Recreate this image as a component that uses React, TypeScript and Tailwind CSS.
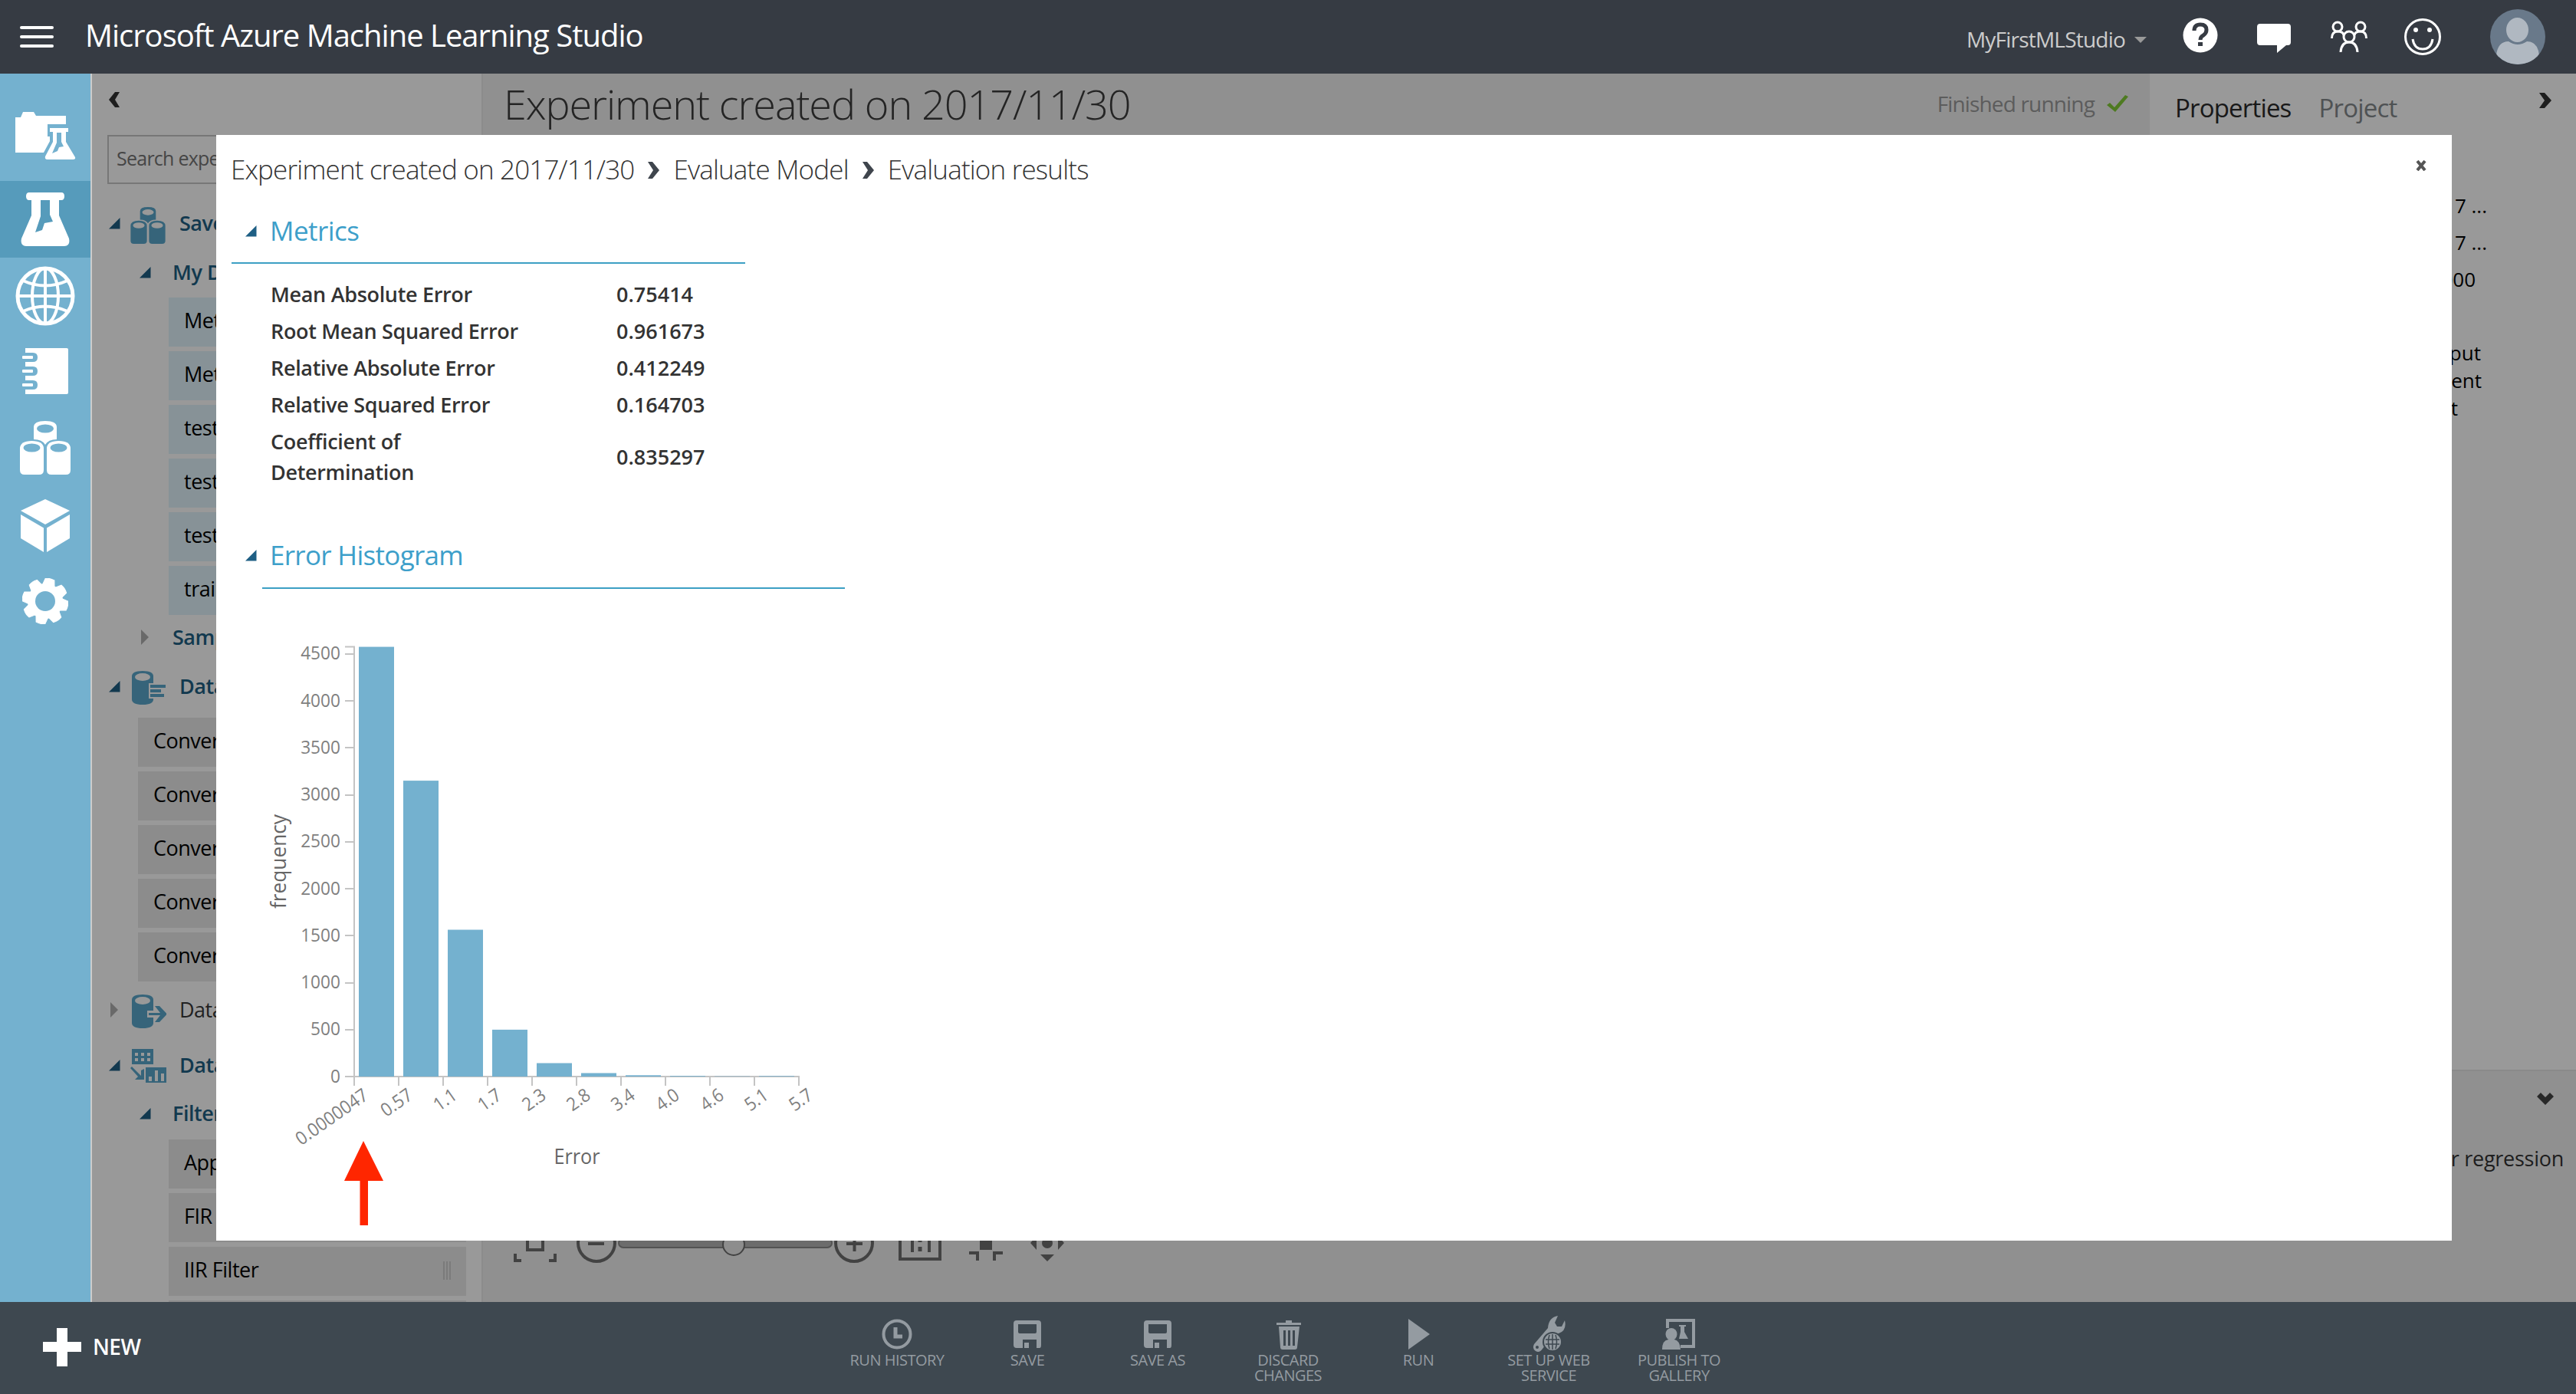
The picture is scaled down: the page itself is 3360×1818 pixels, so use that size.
import type { ReactNode } from "react";

type Size = { className?: string };

function Flask({ className = "", hole }: Size & { hole: string }) {
  return (
    <svg viewBox="0 0 64 70" className={className}>
      <path
        d="M11 0h42q4 0 4 5t-4 5h-3v20l13 30q2 10-6 10H7q-8 0-6-10l13-30V10h-3q-4 0-4-5t4-5z"
        fill="#fff"
      />
      <path d="M26 10h12v19l4 9-11 2-3 9-9 3 7-21z" fill={hole} />
    </svg>
  );
}

function ProjectsIcon() {
  return (
    <svg viewBox="0 0 80 64" className="h-16 w-20">
      <path d="M1 8h7l3-7h14l3 5h39v48H1z" fill="#fff" />
      <path
        d="M46 20h25v10h-4v10l12 24H36l13-24V30h-3z"
        fill="#fff"
        stroke="#74b1cf"
        strokeWidth="6"
      />
      <path d="M46 22h24v5h-3v13l12 20q1 3-3 3H43q-4 0-3-4l10-19V27h-4z" fill="#fff" />
      <path d="M55 28h6v12l3 6-6 1-2 5-7 3 6-14z" fill="#74b1cf" />
    </svg>
  );
}

function GlobeIcon() {
  return (
    <svg viewBox="0 0 78 78" className="size-[78px]" fill="none" stroke="#fff" strokeWidth="4">
      <circle cx="39" cy="39" r="36" strokeWidth="5" />
      <ellipse cx="39" cy="39" rx="17" ry="36" />
      <path d="M39 3v72M3 39h72M10 19q29 13 58 0M10 59q29-13 58 0" />
    </svg>
  );
}

function NotebookIcon() {
  return (
    <svg viewBox="0 0 60 60" className="size-[60px]">
      <path d="M4 0h54q2 0 2 2v56q0 2-2 2H4z" fill="#fff" />
      {[6, 24, 42].map((y) => (
        <g key={y}>
          <path d={`M0 ${y}h14q6 0 6 6t-6 6H0z`} fill="#74b1cf" />
          <rect x="0" y={y + 4} width="14" height="4" rx="1" fill="#fff" />
        </g>
      ))}
    </svg>
  );
}

function Cylinders({ className = "", fill, hole }: Size & { fill: string; hole: string }) {
  return (
    <svg viewBox="0 0 66 70" className={className} fill={fill}>
      <path d="M18 8q0-8 15-8t15 8v16q-11 0-15 7-4-7-15-7z" />
      <ellipse cx="33" cy="10" rx="11" ry="5.5" fill={hole} />
      <path d="M0 36q0-10 15.500-10T31 36v28q0 6-6 6H6q-6 0-6-6z" />
      <ellipse cx="15.500" cy="35" rx="11" ry="5.500" fill={hole} />
      <path d="M35 36q0-10 15.500-10T66 36v28q0 6-6 6H41q-6 0-6-6z" />
      <ellipse cx="50.500" cy="35" rx="11" ry="5.500" fill={hole} />
    </svg>
  );
}

function CubeIcon() {
  return (
    <svg viewBox="0 0 64 70" className="h-[70px] w-16" fill="#fff">
      <path d="M32 0 64 15 32 33 0 15z" />
      <path d="M0 20l30 17.500V69L0 51z" />
      <path d="M64 20 34 37.500V69l30-18z" />
    </svg>
  );
}

function GearIcon() {
  return (
    <svg viewBox="-30 -30 60 60" className="size-[60px]">
      <circle r="23" fill="#fff" />
      {[12, 57, 102, 147, 192, 237, 282, 327].map((a) => (
        <path
          key={a}
          d="M-8-20l2-9q6-2 12 0l2 9z"
          fill="#fff"
          stroke="#fff"
          strokeWidth="1"
          transform={`rotate(${a})`}
        />
      ))}
      <circle r="13" fill="#74b1cf" />
    </svg>
  );
}

function DataFormatIcon() {
  return (
    <svg viewBox="0 0 48 48" className="size-12" fill="#5aa7cb">
      <path d="M3 9q0-7 14-7t14 7v30q0 7-14 7T3 39z" />
      <ellipse cx="17" cy="10" rx="10" ry="5" fill="#fff" />
      <path d="M25 18h24v20H25z" fill="#fff" />
      <path d="M27 20h20v4H27zM27 26h14v4H27zM27 32h18v4H27z" />
    </svg>
  );
}

function DataInputIcon() {
  return (
    <svg viewBox="0 0 48 48" className="size-12" fill="#5aa7cb">
      <path d="M3 9q0-7 14-7t14 7v30q0 7-14 7T3 39z" />
      <ellipse cx="17" cy="10" rx="10" ry="5" fill="#fff" />
      <path d="M23 23h9v9h-9z" fill="#fff" />
      <path d="M25 26h15l-7-9h6l10 10.500L39 38h-6l7-9H25z" />
    </svg>
  );
}

function DataTransformIcon() {
  return (
    <svg viewBox="0 0 48 48" className="size-12" fill="#5aa7cb">
      <path d="M3 1h28v20H3z" />
      <path d="M7 6h4v4H7zM15 6h4v4h-4zM23 6h4v4h-4zM7 13h4v4H7zM15 13h4v4h-4zM23 13h4v4h-4z" fill="#fff" />
      <path d="M3 24l12 12v-7l4-2v14H7l4-4L1 26z" />
      <path d="M21 25h28v20H21z" />
      <path d="M25 37h4v6h-4zM33 29h4v14h-4zM41 33h4v10h-4z" fill="#fff" />
    </svg>
  );
}

const RAIL: { name: string; icon: ReactNode; className: string }[] = [
  { name: "projects", icon: <ProjectsIcon />, className: "h-[140px] pt-[22px]" },
  { name: "experiments", icon: <Flask hole="#569bbb" className="h-[70px] w-16" />, className: "h-[100px] bg-[#569bbb]" },
  { name: "web services", icon: <GlobeIcon />, className: "h-[100px]" },
  { name: "notebooks", icon: <NotebookIcon />, className: "h-[96px]" },
  { name: "datasets", icon: <Cylinders fill="#fff" hole="#74b1cf" className="h-[70px] w-[66px]" />, className: "h-[104px]" },
  { name: "models", icon: <CubeIcon />, className: "h-[100px]" },
  { name: "settings", icon: <GearIcon />, className: "h-[96px]" },
];

function Rail() {
  return (
    <nav className="flex w-[120px] shrink-0 flex-col border-r-2 border-[#ccc] bg-[#74b1cf]">
      {RAIL.map((item) => (
        <button
          key={item.name}
          type="button"
          aria-label={item.name}
          className={`flex w-full items-center justify-center ${item.className}`}
        >
          {item.icon}
        </button>
      ))}
    </nav>
  );
}

function OpenMark() {
  return (
    <svg viewBox="0 0 15 15" className="size-[15px] shrink-0">
      <path d="M14.500 0v14.500H0z" fill="#1e5f84" />
    </svg>
  );
}

function ClosedMark() {
  return (
    <svg viewBox="0 0 15 20" className="h-5 w-[15px] shrink-0">
      <path d="M2 0l10 10L2 20z" fill="#b0b0b0" />
    </svg>
  );
}

function Group({ label, icon, open = true, className = "" }: Size & { label: string; icon: ReactNode; open?: boolean }) {
  return (
    <div className={`flex shrink-0 items-center pl-[22px] ${className}`}>
      {open ? <OpenMark /> : <ClosedMark />}
      <span className="ml-3 mt-1">{icon}</span>
      <span className={open ? "ml-[17px] font-semibold text-[#1e5f84]" : "ml-[17px] text-[#383838]"}>{label}</span>
    </div>
  );
}

function SubGroup({ label, open = true, className = "" }: Size & { label: string; open?: boolean }) {
  return (
    <div className={`flex shrink-0 items-center pl-[62px] font-semibold text-[#1e5f84] ${className}`}>
      {open ? <OpenMark /> : <ClosedMark />}
      <span className="ml-7">{label}</span>
    </div>
  );
}

function Items({ labels, className = "" }: Size & { labels: string[] }) {
  return (
    <ul className="flex shrink-0 flex-col gap-1.5">
      {labels.map((label, i) => (
        <li
          key={i}
          className={`mr-5 flex h-16 items-center justify-between pr-5 pb-[3px] pl-5 text-black ${className}`}
        >
          {label}
          <span className="flex h-6 gap-0.5">
            <i className="w-0.5 bg-[#cdcdcd]" />
            <i className="w-0.5 bg-[#cdcdcd]" />
            <i className="w-0.5 bg-[#cdcdcd]" />
          </span>
        </li>
      ))}
    </ul>
  );
}

function ModulePanel() {
  return (
    <aside className="flex w-[510px] shrink-0 flex-col overflow-hidden border-r-2 border-[#eaeaea] bg-white text-[27px] tracking-[-0.018em]">
      <div className="flex h-20 shrink-0 items-start pl-[22px] pt-6">
        <svg viewBox="0 0 14 20" className="h-5 w-3.5">
          <path d="M8 0h6L8 10l6 10H8L0 10z" fill="#333" />
        </svg>
      </div>
      <div className="mx-5 flex h-16 shrink-0 items-center border-2 border-[#c6c6c6] pb-0.5 pl-[10px] text-[25px] tracking-[-0.03em] text-[#757575]">
        Search experiment items
      </div>
      <Group
        label="Saved Datasets"
        icon={<Cylinders fill="#5aa7cb" hole="#fff" className="size-12" />}
        className="mt-[21px] h-[61px]"
      />
      <SubGroup label="My Datasets" className="h-[66px]" />
      <Items
        labels={["Metadata - train", "Metadata - test", "test_01.csv", "test_02.csv", "test_03.csv", "train.csv"]}
        className="ml-[100px] bg-[#e1f3fc]"
      />
      <SubGroup label="Samples" open={false} className="h-[58px]" />
      <Group label="Data Format Conversions" icon={<DataFormatIcon />} className="mb-1.5 h-[70px]" />
      <Items
        labels={["Convert to ARFF", "Convert to CSV", "Convert to Dataset", "Convert to SVMLight", "Convert to TSV"]}
        className="ml-[60px] bg-[#e9e9e9]"
      />
      <Group label="Data Input and Output" icon={<DataInputIcon />} open={false} className="h-[74px]" />
      <Group label="Data Transformation" icon={<DataTransformIcon />} className="h-[70px]" />
      <SubGroup label="Filter" className="mb-[5px] h-[57px]" />
      <Items labels={["Apply Filter", "FIR Filter", "IIR Filter"]} className="ml-[100px] bg-[#e9e9e9]" />
      <div className="mt-1.5 mr-5 ml-[100px] h-0.5 shrink-0 bg-[#e9e9e9]" />
    </aside>
  );
}

function ZoomControls() {
  return (
    <svg viewBox="660 1590 740 64" className="ml-[30px] h-16 w-[740px]" fill="none" stroke="#6e6e6e" strokeWidth="4">
      <path d="M688 1606h20v24h-20zM672 1635v9h8M724 1635v9h-8" />
      <circle cx="778" cy="1621" r="24" />
      <path d="M767 1622h21" />
      <rect x="807" y="1615" width="278" height="12" rx="6" fill="#b5b5b5" stroke="#8a8a8a" strokeWidth="2" />
      <circle cx="957" cy="1623" r="14" fill="#ececec" stroke="#6e6e6e" strokeWidth="2" />
      <circle cx="1114" cy="1621" r="24" />
      <path d="M1104 1622h21M1114.500 1611v21" />
      <path d="M1174 1600h52v42h-52zM1190 1614v19M1212 1614v19" />
      <path d="M1200 1614v6M1200 1626v6" strokeWidth="5" />
      <path d="M1278 1610h16v20h-16z" fill="#6e6e6e" stroke="none" />
      <path d="M1264 1634h11v10M1308 1634h-11v10" />
      <g fill="#6e6e6e" stroke="none">
        <circle cx="1366" cy="1621" r="7" />
        <path d="M1344 1621l8-9v18zM1388 1621l-8-9v18zM1357 1636h18l-9 9z" />
      </g>
    </svg>
  );
}

function Canvas() {
  return (
    <main className="flex w-[2174px] shrink-0 flex-col justify-between bg-[#f1f1f1]">
      <div className="flex justify-between">
        <h1 className="ml-[27px] mt-[-3px] text-[54px] leading-[84px] font-light tracking-[-0.0205em] text-[#3c3c3c]">
          Experiment created on 2017/11/30
        </h1>
        <div className="mr-7 mt-[19px] flex h-10 items-center gap-4 text-[28px] tracking-[-0.03em] text-[#9a9a9a]">
          Finished running
          <svg viewBox="0 0 28 22" className="h-[22px] w-7">
            <path d="M0 13l4-3 6 6L24 0l4 2-17 20z" fill="#82cc38" />
          </svg>
        </div>
      </div>
      <div className="flex h-[108px]">
        <ZoomControls />
      </div>
    </main>
  );
}

const PROPERTY_LINES = [
  { text: "11/30/2017 ...", className: "mt-16 pr-[116px]" },
  { text: "11/30/2017 ...", className: "mt-3 pr-[116px]" },
  { text: "0:00:00.000", className: "mt-3 pr-[131px]" },
  { text: "View output", className: "mt-[60px] pr-[124px]" },
  { text: "View experiment", className: "pr-[123px]" },
  { text: "View result t", className: "pr-[154px]" },
];

function PropertiesPanel() {
  return (
    <aside className="flex grow flex-col bg-white text-[26px] text-black">
      <div className="flex h-[90px] shrink-0 items-center pl-[33px] text-[33px] tracking-[-0.025em]">
        <span className="text-[#2b2b2b]">Properties</span>
        <span className="ml-9 text-[#84898c]">Project</span>
        <svg viewBox="0 0 16 20" className="mb-5 ml-auto mr-8 h-5 w-4">
          <path d="M0 0h7l9 10-9 10H0l7-10z" fill="#333" />
        </svg>
      </div>
      <div className="flex h-[1209px] shrink-0 flex-col text-right">
        {PROPERTY_LINES.map((line, i) => (
          <p key={i} className={`leading-9 ${line.className}`}>
            {line.text}
          </p>
        ))}
      </div>
      <div className="flex grow flex-col items-end border-t-2 border-[#e6e6e6] bg-[#f1f1f1]">
        <svg viewBox="0 0 22 16" className="mr-[29px] mt-7 h-4 w-[22px]">
          <path d="M0 5l5-5 6 6 6-6 5 5-11 11z" fill="#444" />
        </svg>
        <p className="mr-4 mt-[50px] text-[27px] leading-10 tracking-[-0.01em] whitespace-nowrap text-[#333]">
          Evaluates a model for regression
        </p>
      </div>
    </aside>
  );
}

const METRICS = [
  ["Mean Absolute Error", "0.75414"],
  ["Root Mean Squared Error", "0.961673"],
  ["Relative Absolute Error", "0.412249"],
  ["Relative Squared Error", "0.164703"],
  ["Coefficient of Determination", "0.835297"],
];

const BINS = [4575, 3150, 1563, 499, 143, 37, 14, 7, 3, 6];
const X_LABELS = ["0.0000047", "0.57", "1.1", "1.7", "2.3", "2.8", "3.4", "4.0", "4.6", "5.1", "5.7"];
const Y_TICKS = [0, 500, 1000, 1500, 2000, 2500, 3000, 3500, 4000, 4500];

const X0 = 160;
const Y0 = 604;
const STEP = 58;
const yOf = (v: number) => Y0 - v * 0.1225;
// digits are 0.54em wide, the point 0.22em
const textWidth = (s: string, size: number) =>
  [...s].reduce((w, c) => w + (c === "." ? 0.22 : 0.54) * size, 0);

function Histogram() {
  return (
    <svg viewBox="0 0 820 800" className="ml-5 mt-8 h-[800px] w-[820px] shrink-0">
      <g fill="none" stroke="#c4c4c4" strokeWidth="2">
        <path d={`M148 ${yOf(4575)}H${X0}V${Y0}H148`} />
        <path d={`M${X0} ${Y0 + 12}V${Y0}H${X0 + STEP * 10}V${Y0 + 12}`} />
        {Y_TICKS.map((v) => (
          <path key={v} d={`M148 ${Math.round(yOf(v))}h12`} />
        ))}
        {X_LABELS.map((l, i) => (
          <path key={l} d={`M${X0 + i * STEP} ${Y0}v12`} />
        ))}
      </g>
      {BINS.map((v, i) => (
        <rect key={i} x={X0 + 6 + i * STEP} y={yOf(v)} width="46" height={Y0 - yOf(v)} fill="#74b1cf" />
      ))}
      <g fill="#808080" fontSize="24" textAnchor="end">
        {Y_TICKS.map((v) => (
          <text key={v} x="142" y={yOf(v) + 7.5} textLength={textWidth(String(v), 24)} lengthAdjust="spacingAndGlyphs">
            {v}
          </text>
        ))}
        {X_LABELS.map((l, i) => (
          <text
            key={l}
            transform={`translate(${X0 + 20 + i * STEP} ${Y0 + 28}) rotate(-35)`}
            textLength={textWidth(l, 24)}
            lengthAdjust="spacingAndGlyphs"
          >
            {l}
          </text>
        ))}
      </g>
      <g fill="#666" fontSize="27" textAnchor="middle">
        <text x="450.500" y="717.500" textLength="60" lengthAdjust="spacingAndGlyphs">
          Error
        </text>
        <text transform="translate(70.500 323.500) rotate(-90)" textLength="123" lengthAdjust="spacingAndGlyphs">
          frequency
        </text>
      </g>
      <path d="M172 688l26 52h-20v58h-10.500v-58H147z" fill="#ff2600" />
    </svg>
  );
}

function Crumb() {
  return (
    <svg viewBox="0 0 15 22" className="mx-[18px] mt-0.5 h-[22px] w-[15px]">
      <path d="M0 0h6l9 11-9 11H0l7-11z" fill="#3f454d" />
    </svg>
  );
}

function ResultsDialog() {
  return (
    <section
      role="dialog"
      aria-label="Evaluation results"
      className="absolute top-20 left-[162px] flex h-[1442px] w-[2916px] flex-col bg-white"
    >
      <div className="flex h-[92px] shrink-0 items-center pb-0.5 pl-[19px] text-[35px] font-light tracking-[-0.0235em] text-[#333]">
        <span>Experiment created on 2017/11/30</span>
        <Crumb />
        <span>Evaluate Model</span>
        <Crumb />
        <span>Evaluation results</span>
        <svg viewBox="0 0 14 14" className="mb-2.5 ml-auto mr-[33px] size-3.5">
          <path d="M2 1l10 12M12 1L2 13" stroke="#555" strokeWidth="4" />
        </svg>
      </div>
      <div className="ml-5 flex h-[76px] w-[670px] shrink-0 items-center border-b-2 border-[#3c9fc4] pb-2 pl-[18px] text-[35px] tracking-[-0.015em] text-[#3d9fca]">
        <OpenMark />
        <h2 className="ml-[17px]">Metrics</h2>
      </div>
      <table className="mt-4 ml-[71px] w-[620px] shrink-0 border-collapse text-[27px] font-semibold text-[#333]">
        <tbody>
          {METRICS.map(([label, value]) => (
            <tr key={label}>
              <td className="w-[450px] py-1 pr-[105px] leading-10 tracking-[-0.012em]">{label}</td>
              <td className="py-1 pl-px leading-10">{value}</td>
            </tr>
          ))}
        </tbody>
      </table>
      <div className="mt-[46px] flex h-20 shrink-0 items-center pb-1 pl-[38px] text-[35px] tracking-[-0.02em] text-[#3d9fca]">
        <OpenMark />
        <h2 className="ml-[17px]">Error Histogram</h2>
      </div>
      <hr className="ml-[60px] w-[760px] shrink-0 border-t-2 border-[#3c9fc4]" />
      <Histogram />
    </section>
  );
}

function Header() {
  return (
    <header className="flex h-24 shrink-0 items-center bg-[#363b43] pl-[26px]">
      <div className="flex w-11 flex-col gap-2">
        <i className="h-1 rounded-full bg-white" />
        <i className="h-1 rounded-full bg-white" />
        <i className="h-1 rounded-full bg-white" />
      </div>
      <span className="mb-1 ml-[41px] text-[40px] tracking-[-0.025em] text-white">
        Microsoft Azure Machine Learning Studio
      </span>
      <span className="mt-1.5 ml-auto text-[28px] tracking-[-0.028em] text-[#ccc]">MyFirstMLStudio</span>
      <svg viewBox="0 0 16 8" className="mt-2 ml-3 h-2 w-4">
        <path d="M0 0h16L8 8z" fill="#999" />
      </svg>
      <svg viewBox="0 0 46 46" className="mb-1 ml-[47px] size-[46px]">
        <circle cx="23" cy="23" r="22.500" fill="#fff" />
        <path d="M15 17q0-8 8-8t8 7q0 4-4 7-4 2-4 6" fill="none" stroke="#363b43" strokeWidth="5" />
        <path d="M20 32h6v5h-6z" fill="#363b43" />
      </svg>
      <svg viewBox="0 0 44 38" className="mt-1 ml-[51px] h-[38px] w-11">
        <path d="M4 0h36q4 0 4 4v20q0 4-4 4h-2L26 38v-10H4q-4 0-4-4V4q0-4 4-4z" fill="#fff" />
      </svg>
      <svg viewBox="0 0 48 42" className="ml-[52px] h-[42px] w-12" fill="none" stroke="#fff" strokeWidth="3">
        <circle cx="9" cy="8" r="6" />
        <circle cx="39" cy="8" r="6" />
        <circle cx="24" cy="21" r="7" />
        <path d="M1.500 23q0-9 7.500-9t8 5M46.500 23q0-9-7.500-9t-8 5M13 41q1-13 11-13t11 13" />
      </svg>
      <svg viewBox="0 0 48 48" className="ml-12 size-12" fill="none" stroke="#fff" strokeWidth="3">
        <circle cx="24" cy="24" r="22.500" />
        <path d="M11 27q2 13 13 13t13-13" />
        <circle cx="15" cy="15" r="3" fill="#fff" stroke="none" />
        <circle cx="33" cy="15" r="3" fill="#fff" stroke="none" />
      </svg>
      <span className="mr-10 ml-16 size-[72px] overflow-hidden rounded-full">
        <svg viewBox="0 0 72 72" className="size-[72px]">
          <path d="M0 0h72v72H0z" fill="#69798a" />
          <ellipse cx="35.500" cy="27" rx="14.500" ry="16" fill="#b0b8c1" />
          <path d="M8 72V60q2-18 16-18 12 8 24 0 14 0 16 18v12z" fill="#b0b8c1" />
        </svg>
      </span>
    </header>
  );
}

function SaveIcon() {
  return (
    <svg viewBox="0 0 40 40" className="size-10">
      <path
        fillRule="evenodd"
        fill="#949ba1"
        d="M6 2h28q4 0 4 4v28q0 4-2 4h-4V27H14v11H6q-4 0-4-4V6q0-4 4-4zM8 7v10q0 2 2 2h20q2 0 2-2V7zM16 31h6v7h-6z"
      />
    </svg>
  );
}

const ACTIONS: { label: string; icon: ReactNode }[] = [
  {
    label: "RUN HISTORY",
    icon: (
      <svg viewBox="0 0 40 40" className="size-10" fill="none" stroke="#949ba1">
        <circle cx="20" cy="20" r="17.500" strokeWidth="4" />
        <path d="M18 11v12h9" strokeWidth="5" />
      </svg>
    ),
  },
  { label: "SAVE", icon: <SaveIcon /> },
  { label: "SAVE AS", icon: <SaveIcon /> },
  {
    label: "DISCARD CHANGES",
    icon: (
      <svg viewBox="0 0 40 40" className="size-10" fill="#949ba1">
        <path d="M17 2h8v3h12v3H5V5h12z" />
        <path fillRule="evenodd" d="M8 10h27l-3 27q0 3-3 3H13q-3 0-3-3zM14 15v20h3V15zM20 15v20h3V15zM26 15v20h3V15z" />
      </svg>
    ),
  },
  {
    label: "RUN",
    icon: (
      <svg viewBox="0 0 40 40" className="size-10" fill="#949ba1">
        <path d="M7 0l28 20L7 40z" />
      </svg>
    ),
  },
  {
    label: "SET UP WEB SERVICE",
    icon: (
      <svg viewBox="0 0 48 48" className="-mt-1 size-12" fill="#949ba1">
        <path d="M36 0l-4 9 3 5 6 0 4-8q3 13-8 17l-7 2-14 18q-4 6-9 3t-2-9L23 16Q24 2 36 0z" />
        <circle cx="29" cy="34" r="13" fill="#3e4850" />
        <circle cx="29" cy="34" r="11" />
        <path d="M20 31h18M20 37h18M29 24v20M25 25q-3 9 0 18M33 25q3 9 0 18" fill="none" stroke="#3e4850" strokeWidth="1.500" />
        <circle cx="9" cy="41" r="2" fill="#3e4850" />
      </svg>
    ),
  },
  {
    label: "PUBLISH TO GALLERY",
    icon: (
      <svg viewBox="0 0 44 40" className="h-10 w-11" fill="#949ba1">
        <path d="M5 0h38v38H24v-4h15V4H9v8H5z" />
        <path d="M22 8h9v2h-2v7l5 9H22l2-9v-7h-2z" />
        <ellipse cx="12" cy="20" rx="7.500" ry="8" />
        <path d="M0 40q0-12 8-13h8q7 1 8 13z" />
      </svg>
    ),
  },
];

function CommandBar() {
  return (
    <footer className="flex h-[120px] shrink-0 bg-[#3e4850]">
      <button
        type="button"
        className="flex h-[118px] w-[1085px] items-center pl-14 text-[28px] font-semibold tracking-[-0.02em] text-white"
      >
        <svg viewBox="0 0 50 50" className="size-[50px]">
          <path d="M18 0h14v18h18v13H32v19H18V31H0V18h18z" fill="#fff" />
        </svg>
        <span className="mb-0.5 ml-[15px]">NEW</span>
      </button>
      {ACTIONS.map((action) => (
        <button
          key={action.label}
          type="button"
          className="flex w-[170px] flex-col items-center pt-[22px] text-[20px] leading-5 tracking-[-0.025em] text-[#949ba1]"
        >
          <span className="flex h-11">{action.icon}</span>
          <span className="w-[132px] text-center">{action.label}</span>
        </button>
      ))}
    </footer>
  );
}

export default function App() {
  return (
    <div className="flex h-[1818px] w-[3360px] flex-col overflow-hidden font-['Open_Sans','Noto_Sans',sans-serif]">
      <Header />
      <div className="flex h-[1602px] shrink-0">
        <Rail />
        <div className="relative flex grow">
          <ModulePanel />
          <Canvas />
          <PropertiesPanel />
          <div className="absolute inset-0 bg-black/40" />
          <ResultsDialog />
        </div>
      </div>
      <CommandBar />
    </div>
  );
}
